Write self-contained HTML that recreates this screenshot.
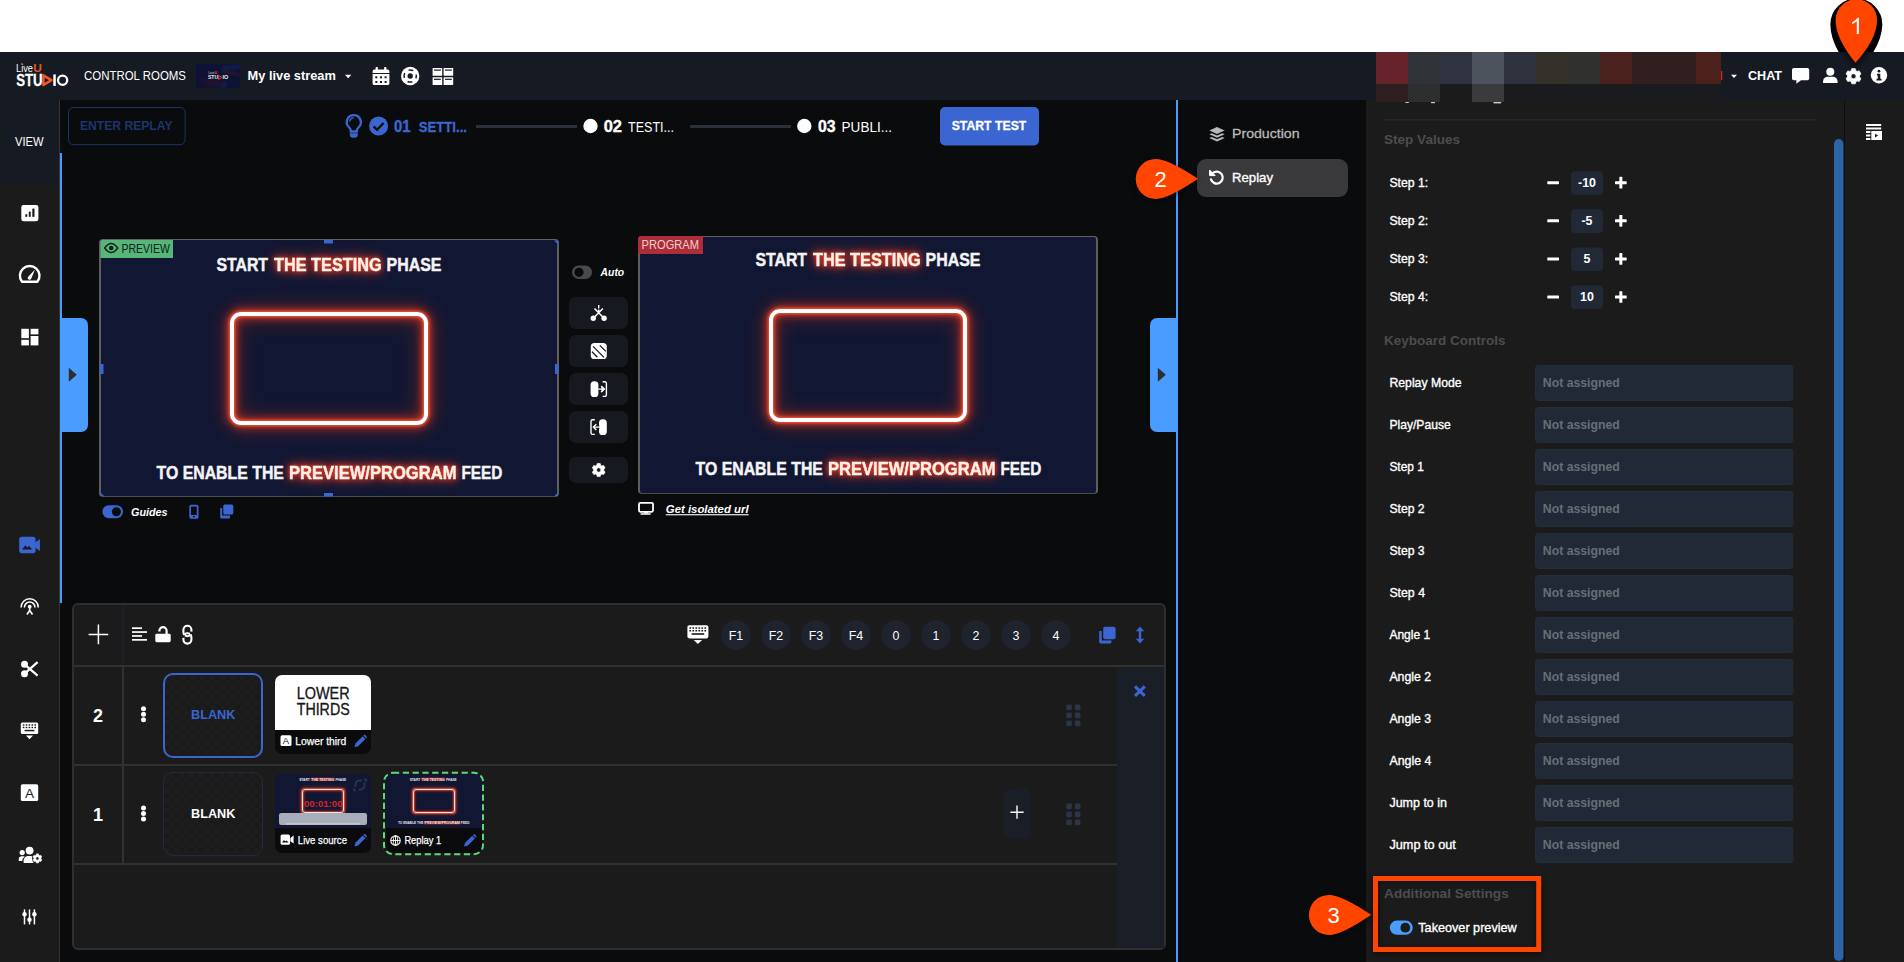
<!DOCTYPE html>
<html>
<head>
<meta charset="utf-8">
<title>LiveU Studio</title>
<style>
*{box-sizing:border-box;margin:0;padding:0}
html,body{width:1904px;height:962px;overflow:hidden;background:#fff;font-family:"Liberation Sans",sans-serif;color:#fff}
#app{position:absolute;left:0;top:0;width:1904px;height:962px;overflow:hidden;background:#0a0b0d}
.abs{position:absolute}
#ov{position:absolute;left:0;top:0;width:1904px;height:962px;font-family:"Liberation Sans",sans-serif;fill:#fff}
#white{left:0;top:0;width:1904px;height:52px;background:#fff}
#nav{left:0;top:52px;width:1904px;height:48px;background:#161a23}
#side{left:0;top:100px;width:60px;height:862px;background:#1b1b1b}
#sideTop{left:0;top:100px;width:60px;height:84px;background:#161a23}
#sideLn{left:59px;top:100px;width:1px;height:862px;background:#343434}
#blueL{left:60px;top:153px;width:2px;height:450px;background:#4a9dff}
#blueR{left:1176px;top:100px;width:2px;height:862px;background:#4a9dff}
#setNav{left:1178px;top:100px;width:188px;height:862px;background:#0a0b0d}
#setBody{left:1366px;top:100px;width:478px;height:862px;background:#1b1b1b}
#rail{left:1844px;top:100px;width:60px;height:862px;background:#1b1b1b;border-left:1px solid #0e0e0e}
</style>
</head>
<body>
<div id="app">
<div id="white" class="abs"></div>
<div id="nav" class="abs"></div>
<div id="side" class="abs"></div>
<div id="sideTop" class="abs"></div>
<div id="sideLn" class="abs"></div>
<div id="blueL" class="abs"></div>
<div id="blueR" class="abs"></div>
<div id="setNav" class="abs"></div>
<div id="setBody" class="abs"></div>
<div id="rail" class="abs"></div>
<!-- p_nav -->
<div class="abs" style="left:196px;top:64px;width:44px;height:24px;background:#0e1335;overflow:hidden"></div>
<div class="abs" style="left:1376px;top:52px;width:32px;height:32px;background:#66242a"></div>
<div class="abs" style="left:1408px;top:52px;width:32px;height:32px;background:#2f3338"></div>
<div class="abs" style="left:1440px;top:52px;width:32px;height:32px;background:#2f3340"></div>
<div class="abs" style="left:1472px;top:52px;width:32px;height:32px;background:#4d535c"></div>
<div class="abs" style="left:1504px;top:52px;width:32px;height:32px;background:#2e323c"></div>
<div class="abs" style="left:1536px;top:52px;width:32px;height:32px;background:#34302a"></div>
<div class="abs" style="left:1568px;top:52px;width:32px;height:32px;background:#30302e"></div>
<div class="abs" style="left:1600px;top:52px;width:32px;height:32px;background:#4a211c"></div>
<div class="abs" style="left:1632px;top:52px;width:32px;height:32px;background:#301f1e"></div>
<div class="abs" style="left:1664px;top:52px;width:32px;height:32px;background:#311e1f"></div>
<div class="abs" style="left:1696px;top:52px;width:25px;height:32px;background:#4c211c"></div>
<div class="abs" style="left:1376px;top:84px;width:32px;height:18px;background:#2e1e1f"></div>
<div class="abs" style="left:1408px;top:84px;width:32px;height:18px;background:#2d2e30"></div>
<div class="abs" style="left:1440px;top:84px;width:32px;height:18px;background:#1a1b1d"></div>
<div class="abs" style="left:1472px;top:84px;width:32px;height:18px;background:#3a3b3d"></div>
<div class="abs" style="left:1504px;top:84px;width:217px;height:16px;background:#1a1b1e"></div>
<!-- p_step -->

<!-- p_prev -->
<div class="abs" style="left:99px;top:239px;width:460px;height:258px;background:#111733;border-style:solid;border-color:#626264 #5e5e60 #4c4c50 #5e5e60;border-width:1.5px 2px 1px 2px;border-radius:4px"></div>
<div class="abs" style="left:230px;top:312px;width:198px;height:113px;border:4px solid #fff;border-radius:11px;box-shadow:0 0 3px 1px #f8583a,0 0 9px 2px rgba(222,58,30,.9),0 0 20px 4px rgba(190,44,24,.45),inset 0 0 3px 1px #f8583a,inset 0 0 9px 2px rgba(222,58,30,.9),inset 0 0 20px 4px rgba(190,44,24,.42)"></div>
<div class="abs" style="left:638px;top:236px;width:460px;height:258px;background:#111733;border-style:solid;border-color:#626264 #5e5e60 #4c4c50 #5e5e60;border-width:1.5px 2px 1px 2px;border-radius:4px"></div>
<div class="abs" style="left:769px;top:309px;width:198px;height:113px;border:4px solid #fff;border-radius:11px;box-shadow:0 0 3px 1px #f8583a,0 0 9px 2px rgba(222,58,30,.9),0 0 20px 4px rgba(190,44,24,.45),inset 0 0 3px 1px #f8583a,inset 0 0 9px 2px rgba(222,58,30,.9),inset 0 0 20px 4px rgba(190,44,24,.42)"></div>
<!-- p_time -->
<div class="abs" style="left:72px;top:603px;width:1094px;height:347px;background:#1b1b1b;border:2px solid #2f2f2f;border-radius:6px"></div>
<div class="abs" style="left:1117px;top:667px;width:47px;height:281px;background:#1a1e26"></div>
<div class="abs" style="left:163px;top:673px;width:100px;height:85px;border:2px solid #3b66d1;border-radius:10px;background-color:#1a1a1a;background-image:linear-gradient(45deg,#1d1d1d 25%,transparent 25%,transparent 75%,#1d1d1d 75%),linear-gradient(45deg,#1d1d1d 25%,transparent 25%,transparent 75%,#1d1d1d 75%);background-size:10px 10px;background-position:0 0,5px 5px"></div>
<div class="abs" style="left:163px;top:772px;width:100px;height:84px;border:1.5px solid #202c3e;border-radius:10px;background-color:#1a1a1a;background-image:linear-gradient(45deg,#1d1d1d 25%,transparent 25%,transparent 75%,#1d1d1d 75%),linear-gradient(45deg,#1d1d1d 25%,transparent 25%,transparent 75%,#1d1d1d 75%);background-size:10px 10px;background-position:0 0,5px 5px"></div>
<div class="abs" style="left:275px;top:675px;width:96px;height:79px;background:#0b0b0d;border-radius:7px"></div>
<div class="abs" style="left:275px;top:675px;width:96px;height:55px;background:#fff;border-radius:7px 7px 0 0"></div>
<div class="abs" style="left:275px;top:774px;width:96px;height:79px;background:#0b0b0d;border-radius:7px"></div>
<div class="abs" style="left:275px;top:774px;width:96px;height:54px;background:#111733;border-radius:6px 6px 0 0"></div>
<div class="abs" style="left:302.0px;top:789px;width:42px;height:24px;border:1px solid #ffe3dc;border-radius:3px;box-shadow:0 0 1.5px .5px #f04a30,0 0 3.5px .3px rgba(200,48,26,.7),inset 0 0 1.5px .5px #f04a30,inset 0 0 3.5px .3px rgba(200,48,26,.7)"></div>
<div class="abs" style="left:385.5px;top:774px;width:96px;height:79px;background:#0b0b0d;border-radius:7px"></div>
<div class="abs" style="left:385.5px;top:774px;width:96px;height:54px;background:#111733;border-radius:6px 6px 0 0"></div>
<div class="abs" style="left:412.5px;top:789px;width:42px;height:24px;border:1px solid #ffe3dc;border-radius:3px;box-shadow:0 0 1.5px .5px #f04a30,0 0 3.5px .3px rgba(200,48,26,.7),inset 0 0 1.5px .5px #f04a30,inset 0 0 3.5px .3px rgba(200,48,26,.7)"></div>
<!-- p_set -->

<!-- p_side -->

<!-- p_mark -->

<svg id="ov" width="1904" height="962" viewBox="0 0 1904 962">
<!-- p_nav -->
<g id="p_nav">
<text x="16" y="72.4" font-size="11" textLength="17" lengthAdjust="spacingAndGlyphs">Live</text>
<text x="33.2" y="72.4" font-size="11.5" font-weight="bold" fill="#e8541e" textLength="8.6" lengthAdjust="spacingAndGlyphs">U</text>
<rect x="21.2" y="63" width="1.4" height="1.6" fill="#e8541e"/>
<text x="16.2" y="85.9" font-size="16" font-weight="bold" textLength="26.5" lengthAdjust="spacingAndGlyphs" stroke="#fff" stroke-width=".3">STU</text>
<path d="M43.4 75.4 L51.4 80.2 L43.4 85Z" fill="none" stroke="#f05a22" stroke-width="2.6" stroke-linejoin="round"/>
<rect x="53.3" y="74.4" width="2.5" height="11.5" fill="#fff"/>
<circle cx="62.6" cy="80.2" r="4.6" fill="none" stroke="#fff" stroke-width="2.3"/>
<text x="84" y="80.2" font-size="12.3" textLength="102" lengthAdjust="spacingAndGlyphs">CONTROL ROOMS</text>
<defs><clipPath id="ct"><rect x="196" y="64" width="44" height="24"/></clipPath></defs><g clip-path="url(#ct)"><g style="filter:blur(.8px)"><path d="M222 66.4 L240 64.6 V68.6 L222 70Z" fill="#0b2c6e" opacity=".5"/><path d="M222.6 69.6 L240 73.6 V76 L222.6 72.2Z" fill="#4a1528" opacity=".6"/><path d="M197 76.6 L225 81.4 V85.4 L208 87.6Z" fill="#30122e" opacity=".5"/><rect x="224.2" y="81" width="1.3" height="7" fill="#0c3c90" opacity=".8"/><path d="M212 88 L224.6 86.2 V88Z" fill="#0b2c6e" opacity=".5"/></g></g>
<text x="208.2" y="74.2" font-size="3.4" fill="#cfcfd6" textLength="6.2" lengthAdjust="spacingAndGlyphs">Live</text>
<text x="214.6" y="74.2" font-size="3.4" font-weight="bold" fill="#e8541e" textLength="2.6" lengthAdjust="spacingAndGlyphs">U</text>
<text x="208" y="79.4" font-size="5.6" font-weight="bold" fill="#ececf2" textLength="10" lengthAdjust="spacingAndGlyphs">STU</text>
<path d="M218.6 75.4 L221.8 77.4 L218.6 79.4Z" fill="none" stroke="#e8541e" stroke-width="0.9"/>
<text x="222.6" y="79.4" font-size="5.6" font-weight="bold" fill="#ececf2" textLength="5.8" lengthAdjust="spacingAndGlyphs">IO</text>
<text x="247.6" y="80.2" font-size="13.4" font-weight="bold" textLength="88.2" lengthAdjust="spacingAndGlyphs">My live stream</text>
<path d="M345 74.7 h6.4 l-3.2 3.5Z" fill="#fff"/>
<path d="M372.6 71.2 a1.7 1.7 0 0 1 1.7 -1.7 h13.4 a1.7 1.7 0 0 1 1.7 1.7 v1.7 h-16.8Z" fill="#fff"/>
<rect x="375.6" y="67" width="2.3" height="4" fill="#fff" rx="0.8"/>
<rect x="384.1" y="67" width="2.3" height="4" fill="#fff" rx="0.8"/>
<path d="M372.6 73.9 h16.8 v9.5 a1.7 1.7 0 0 1 -1.7 1.7 h-13.4 a1.7 1.7 0 0 1 -1.7 -1.7Z" fill="#fff"/>
<rect x="375.3" y="76.3" width="2" height="2" fill="#161a23"/>
<rect x="379.95" y="76.3" width="2" height="2" fill="#161a23"/>
<rect x="384.6" y="76.3" width="2" height="2" fill="#161a23"/>
<rect x="375.3" y="81.0" width="2" height="2" fill="#161a23"/>
<rect x="379.95" y="81.0" width="2" height="2" fill="#161a23"/>
<rect x="384.6" y="81.0" width="2" height="2" fill="#161a23"/>
<circle cx="410.2" cy="76" r="9.2" fill="#fff"/>
<circle cx="410.2" cy="76" r="2.7" fill="#161a23"/>
<circle cx="410.2" cy="76" r="6.1" fill="none" stroke="#161a23" stroke-width="1.5" stroke-dasharray="4.9 4.68" stroke-dashoffset="2.45"/>
<rect x="432.6" y="68" width="9.6" height="7.8" fill="#fff" rx="0.6"/>
<rect x="434.0" y="69.5" width="6.8" height="1.2" fill="#161a23"/>
<rect x="443.6" y="68" width="9.6" height="7.8" fill="#fff" rx="0.6"/>
<rect x="445.0" y="69.5" width="6.8" height="1.2" fill="#161a23"/>
<rect x="432.6" y="77.2" width="9.6" height="7.8" fill="#fff" rx="0.6"/>
<rect x="434.0" y="78.7" width="6.8" height="1.2" fill="#161a23"/>
<rect x="443.6" y="77.2" width="9.6" height="7.8" fill="#fff" rx="0.6"/>
<rect x="445.0" y="78.7" width="6.8" height="1.2" fill="#161a23"/>
<rect x="1721" y="71" width="1.3" height="9" fill="#d81f26"/>
<path d="M1731 74.8 h6 l-3 3.3Z" fill="#fff"/>
<text x="1748" y="80.2" font-size="13" font-weight="bold" textLength="34" lengthAdjust="spacingAndGlyphs">CHAT</text>
<path d="M1793.8 68 h13.6 a1.8 1.8 0 0 1 1.8 1.8 v8.6 a1.8 1.8 0 0 1 -1.8 1.8 h-6.4 l-4.6 3.5 v-3.5 h-2.6 a1.8 1.8 0 0 1 -1.8 -1.8 v-8.6 a1.8 1.8 0 0 1 1.8 -1.8Z" fill="#fff"/>
<circle cx="1830.3" cy="71.8" r="4" fill="#fff"/>
<path d="M1823 83 v-1.6 a4.6 4.6 0 0 1 4.6 -4.6 h5.4 a4.6 4.6 0 0 1 4.6 4.6 v1.6Z" fill="#fff"/>
<path d="M1851.22 70.64 L1851.75 68.60 L1855.25 68.60 L1855.78 70.64 L1857.17 71.45 L1859.21 70.88 L1860.96 73.91 L1859.45 75.40 L1859.45 77.00 L1860.96 78.49 L1859.21 81.52 L1857.17 80.95 L1855.78 81.76 L1855.25 83.80 L1851.75 83.80 L1851.22 81.76 L1849.83 80.95 L1847.79 81.52 L1846.04 78.49 L1847.55 77.00 L1847.55 75.40 L1846.04 73.91 L1847.79 70.88 L1849.83 71.45Z M1850.93 76.20 a2.574 2.574 0 1 0 5.148 0 a2.574 2.574 0 1 0 -5.148 0Z" fill="#fff" fill-rule="evenodd" stroke="#fff" stroke-width="0.78" stroke-linejoin="round"/>
<circle cx="1879" cy="75.3" r="8.2" fill="#fff"/>
<circle cx="1879" cy="71.2" r="1.35" fill="#161a23"/>
<path d="M1877 73.8 h3.3 v5 h1.2 v1.7 h-5 v-1.7 h1.3 v-3.3 h-.8Z" fill="#161a23"/>
</g>
<!-- p_step -->
<g id="p_step">
<text x="15" y="145.7" font-size="12" textLength="28.7" lengthAdjust="spacingAndGlyphs">VIEW</text>
<rect x="68.5" y="107.5" width="116.6" height="37.2" fill="none" rx="5" stroke="#1c3468" stroke-width="1"/>
<text x="80" y="129.8" font-size="12" font-weight="bold" fill="#1d356c" textLength="92.5" lengthAdjust="spacingAndGlyphs">ENTER REPLAY</text>
<path d="M353.8 115.2 a7 7 0 0 1 4.6 12.3 c-1.1 1 -1.6 2.2 -1.6 3.4 v.6 h-6 v-.6 c0 -1.2 -.5 -2.4 -1.6 -3.4 a7 7 0 0 1 4.6 -12.3Z" fill="none" stroke="#3b66d1" stroke-width="2.3"/>
<path d="M349.8 121.2 a4 4 0 0 1 3.6 -3.3" fill="none" stroke="#3b66d1" stroke-width="1.3" stroke-linecap="round"/>
<path d="M349.8 133.3 h8 v1.1 a3.3 3.3 0 0 1 -3.3 3.3 h-1.4 a3.3 3.3 0 0 1 -3.3 -3.3Z" fill="#3b66d1"/>
<circle cx="378.6" cy="126" r="9.5" fill="#3b66d1"/>
<path d="M373.6 126.4 l3.4 3.4 l6.6 -6.8" fill="none" stroke="#0a0b0d" stroke-width="2.3"/>
<text x="394" y="132" font-size="17.2" font-weight="bold" fill="#3b66d1" textLength="16.6" lengthAdjust="spacingAndGlyphs" stroke="#3b66d1" stroke-width=".4">01</text>
<text x="418.7" y="132" font-size="14.4" font-weight="bold" fill="#3b66d1" textLength="48.3" lengthAdjust="spacingAndGlyphs" stroke="#3b66d1" stroke-width=".3">SETTI...</text>
<rect x="476" y="125" width="101" height="3" fill="#2a313b"/>
<circle cx="590.5" cy="126" r="7.2" fill="#fff"/>
<text x="603.7" y="132" font-size="17.2" font-weight="bold" textLength="18.3" lengthAdjust="spacingAndGlyphs" stroke="#fff" stroke-width=".4">02</text>
<text x="628" y="132" font-size="14.4" textLength="46" lengthAdjust="spacingAndGlyphs">TESTI...</text>
<rect x="690" y="125" width="101" height="3" fill="#2a313b"/>
<circle cx="804.3" cy="126" r="7.2" fill="#fff"/>
<text x="818" y="132" font-size="17.2" font-weight="bold" textLength="17.6" lengthAdjust="spacingAndGlyphs" stroke="#fff" stroke-width=".4">03</text>
<text x="841.6" y="132" font-size="14.4" textLength="50.4" lengthAdjust="spacingAndGlyphs">PUBLI...</text>
<rect x="940" y="107" width="99" height="38.4" fill="#3b66d1" rx="5"/>
<text x="951.7" y="130.4" font-size="13" font-weight="bold" textLength="74.6" lengthAdjust="spacingAndGlyphs" stroke="#fff" stroke-width=".3">START TEST</text>
</g>
<!-- p_prev -->
<g id="p_prev">
<text x="216.4" y="270.7" font-size="18.3" font-weight="bold" fill="#f4f4f4" textLength="51.6" lengthAdjust="spacingAndGlyphs" stroke="#f4f4f4" stroke-width=".45">START</text>
<text x="274" y="270.7" font-size="18.3" font-weight="bold" fill="#fff0ea" textLength="107.7" lengthAdjust="spacingAndGlyphs" stroke="#fff0ea" stroke-width=".45" style="filter:drop-shadow(0 0 2.5px #f0401f) drop-shadow(0 0 6px rgba(215,50,28,.9))">THE TESTING</text>
<text x="386.6" y="270.7" font-size="18.3" font-weight="bold" fill="#f4f4f4" textLength="54.9" lengthAdjust="spacingAndGlyphs" stroke="#f4f4f4" stroke-width=".45">PHASE</text>
<text x="156.5" y="478.8" font-size="18.3" font-weight="bold" fill="#f4f4f4" textLength="127.4" lengthAdjust="spacingAndGlyphs" stroke="#f4f4f4" stroke-width=".45">TO ENABLE THE</text>
<text x="288.9" y="478.8" font-size="18.3" font-weight="bold" fill="#fff0ea" textLength="167.6" lengthAdjust="spacingAndGlyphs" stroke="#fff0ea" stroke-width=".45" style="filter:drop-shadow(0 0 2.5px #f0401f) drop-shadow(0 0 6px rgba(215,50,28,.9))">PREVIEW/PROGRAM</text>
<text x="461.5" y="478.8" font-size="18.3" font-weight="bold" fill="#f4f4f4" textLength="40.9" lengthAdjust="spacingAndGlyphs" stroke="#f4f4f4" stroke-width=".45">FEED</text>
<text x="755.4" y="266.4" font-size="18.3" font-weight="bold" fill="#f4f4f4" textLength="51.6" lengthAdjust="spacingAndGlyphs" stroke="#f4f4f4" stroke-width=".45">START</text>
<text x="813" y="266.4" font-size="18.3" font-weight="bold" fill="#fff0ea" textLength="107.7" lengthAdjust="spacingAndGlyphs" stroke="#fff0ea" stroke-width=".45" style="filter:drop-shadow(0 0 2.5px #f0401f) drop-shadow(0 0 6px rgba(215,50,28,.9))">THE TESTING</text>
<text x="925.6" y="266.4" font-size="18.3" font-weight="bold" fill="#f4f4f4" textLength="54.9" lengthAdjust="spacingAndGlyphs" stroke="#f4f4f4" stroke-width=".45">PHASE</text>
<text x="695.5" y="475.2" font-size="18.3" font-weight="bold" fill="#f4f4f4" textLength="127.4" lengthAdjust="spacingAndGlyphs" stroke="#f4f4f4" stroke-width=".45">TO ENABLE THE</text>
<text x="827.9" y="475.2" font-size="18.3" font-weight="bold" fill="#fff0ea" textLength="167.6" lengthAdjust="spacingAndGlyphs" stroke="#fff0ea" stroke-width=".45" style="filter:drop-shadow(0 0 2.5px #f0401f) drop-shadow(0 0 6px rgba(215,50,28,.9))">PREVIEW/PROGRAM</text>
<text x="1000.5" y="475.2" font-size="18.3" font-weight="bold" fill="#f4f4f4" textLength="40.9" lengthAdjust="spacingAndGlyphs" stroke="#f4f4f4" stroke-width=".45">FEED</text>
<path d="M100.5 242.4 a2.5 2.5 0 0 1 2.5 -2.5 h70 v18.2 h-72.5Z" fill="#57b57a"/>
<path d="M104.6 248 q6.6 -9 13.2 0 q-6.6 9 -13.2 0Z" fill="none" stroke="#0d2417" stroke-width="1.3"/>
<circle cx="111.2" cy="248" r="2.3" fill="#0d2417"/>
<text x="121.5" y="253" font-size="13" fill="#0d2417" textLength="48.3" lengthAdjust="spacingAndGlyphs">PREVIEW</text>
<rect x="324" y="240" width="9" height="3.5" fill="#3b66d1"/>
<rect x="324" y="493" width="9" height="3.5" fill="#3b66d1"/>
<rect x="100" y="364" width="3.5" height="10" fill="#3b66d1"/>
<rect x="555" y="364" width="3.5" height="10" fill="#3b66d1"/>
<path d="M554 240.5 h3 l1.5 1.5 v3Z" fill="#3b66d1"/>
<path d="M100.5 492.5 v3 l.8 .8 h3Z" fill="#3b66d1"/>
<path d="M558 492.5 v3 l-.8 .8 h-3Z" fill="#3b66d1"/>
<path d="M100.6 243 l2.4 -2.4 h-1.6 l-.8 .8Z" fill="#6aa0e8"/>
<path d="M638 239.4 a3.4 3.4 0 0 1 3.4 -3.4 h61.6 v18 h-65Z" fill="#ad2e38"/>
<text x="641.6" y="248.9" font-size="12.8" fill="#f0cfd2" textLength="57.4" lengthAdjust="spacingAndGlyphs">PROGRAM</text>
<rect x="572" y="265.6" width="20" height="13.4" fill="#4a4a4a" rx="6.7"/>
<circle cx="579" cy="272.3" r="4.6" fill="#0a0b0d"/>
<text x="600.6" y="275.9" font-size="11" font-weight="bold" font-style="italic" textLength="23.6" lengthAdjust="spacingAndGlyphs">Auto</text>
<rect x="569" y="297" width="59" height="32" fill="#161a20" rx="7"/>
<rect x="569" y="335" width="59" height="32" fill="#161a20" rx="7"/>
<rect x="569" y="373" width="59" height="32" fill="#161a20" rx="7"/>
<rect x="569" y="411" width="59" height="32" fill="#161a20" rx="7"/>
<rect x="569" y="457" width="59" height="26" fill="#161a20" rx="7"/>
<rect x="598.0" y="305" width="1.4" height="3.4" fill="#fff"/>
<path d="M594.5 308.6 L603.3000000000001 317.6 M602.9000000000001 308.6 L594.1 317.6 M598.7 309.6 v2.4" fill="none" stroke="#fff" stroke-width="1.5"/>
<circle cx="593.3000000000001" cy="318.2" r="2.7" fill="#fff"/>
<circle cx="604.1" cy="318.2" r="2.7" fill="#fff"/>
<rect x="590.8" y="343" width="16" height="16" fill="#fff" rx="3.6"/>
<path d="M593 346.4 l11 11 M592 351.8 l5.4 5.4 M599.8 345.4 l6 6" fill="none" stroke="#161a20" stroke-width="1.3"/>
<rect x="590.6" y="381.2" width="7.8" height="15.8" fill="#fff" rx="3.6"/>
<path d="M602.6 381.8 h2.2 a1.6 1.6 0 0 1 1.6 1.6 v11.4 a1.6 1.6 0 0 1 -1.6 1.6 h-2.2" fill="none" stroke="#fff" stroke-width="1.4"/>
<path d="M597.5 389.1 h6.2 M601.2 386.2 l2.9 2.9 l-2.9 2.9" fill="none" stroke="#fff" stroke-width="1.4"/>
<path d="M598.4 387.6 h2.6 v3 h-2.6Z" fill="#161a20"/>
<path d="M597.5 389.1 h6.2 M601.2 386.2 l2.9 2.9 l-2.9 2.9" fill="none" stroke="#fff" stroke-width="1.4"/>
<rect x="599" y="419.2" width="7.8" height="15.8" fill="#fff" rx="3.6"/>
<path d="M594.8 419.8 h-2.2 a1.6 1.6 0 0 0 -1.6 1.6 v11.4 a1.6 1.6 0 0 0 1.6 1.6 h2.2" fill="none" stroke="#fff" stroke-width="1.4"/>
<path d="M596.4 425.6 h3 v3 h-3Z" fill="#161a20"/>
<path d="M600 427.1 h-6.2 M596.3 424.2 l-2.9 2.9 l2.9 2.9" fill="none" stroke="#fff" stroke-width="1.4"/>
<path d="M596.74 465.23 L597.20 463.47 L600.20 463.47 L600.66 465.23 L601.85 465.92 L603.60 465.43 L605.11 468.04 L603.81 469.31 L603.81 470.69 L605.11 471.96 L603.60 474.57 L601.85 474.08 L600.66 474.77 L600.20 476.53 L597.20 476.53 L596.74 474.77 L595.55 474.08 L593.80 474.57 L592.29 471.96 L593.59 470.69 L593.59 469.31 L592.29 468.04 L593.80 465.43 L595.55 465.92Z M596.49 470.00 a2.2110000000000003 2.2110000000000003 0 1 0 4.422000000000001 0 a2.2110000000000003 2.2110000000000003 0 1 0 -4.422000000000001 0Z" fill="#fff" fill-rule="evenodd" stroke="#fff" stroke-width="0.67" stroke-linejoin="round"/>
<rect x="102.4" y="505.2" width="20.6" height="13" fill="#3b66d1" rx="6.5"/>
<circle cx="116.4" cy="511.7" r="4.5" fill="#0a0b0d"/>
<text x="131" y="515.6" font-size="11.4" font-weight="bold" font-style="italic" textLength="36.6" lengthAdjust="spacingAndGlyphs">Guides</text>
<rect x="189.3" y="504.7" width="9.2" height="14.1" fill="#3b66d1" rx="1.9"/>
<rect x="191" y="506.6" width="5.8" height="8.4" fill="#0a0b0d"/>
<rect x="193" y="516" width="1.8" height="1.3" fill="#0a0b0d"/>
<rect x="223.3" y="504.6" width="10" height="10" fill="#3b66d1" rx="1.6"/>
<path d="M220.2 508 h2 v7.6 h7.8 v1.6 a1.2 1.2 0 0 1 -1.2 1.2 h-7.4 a1.2 1.2 0 0 1 -1.2 -1.2Z" fill="#3b66d1"/>
<rect x="639" y="502.8" width="14" height="9" fill="none" rx="1.2" stroke="#fff" stroke-width="1.8"/>
<path d="M644.5 512 h3 l.6 1.6 h-4.2Z" fill="#fff"/>
<rect x="640.4" y="513.3" width="10.4" height="1.4" fill="#fff" rx="0.6"/>
<text x="665.8" y="512.6" font-size="11.4" font-weight="bold" font-style="italic" textLength="82.8" lengthAdjust="spacingAndGlyphs">Get isolated url</text>
<rect x="665.8" y="514.2" width="82.8" height="1.1" fill="#fff"/>
<path d="M62 318 h19 a7 7 0 0 1 7 7 v100 a7 7 0 0 1 -7 7 h-19Z" fill="#4a9dff"/>
<path d="M68.8 367.8 l8 7 l-8 7Z" fill="#2d2d30"/>
<path d="M1176 318 h-19 a7 7 0 0 0 -7 7 v100 a7 7 0 0 0 7 7 h19Z" fill="#4a9dff"/>
<path d="M1157.8 367.8 l8 7 l-8 7Z" fill="#2d2d30"/>
</g>
<!-- p_time -->
<g id="p_time">
<rect x="74" y="665" width="1090" height="2" fill="#313131"/>
<rect x="122" y="605" width="2" height="60" fill="#1c2029"/>
<rect x="122" y="667" width="2" height="197" fill="#313131"/>
<rect x="74" y="764" width="1043" height="2" fill="#313131"/>
<rect x="74" y="863" width="1043" height="2" fill="#313131"/>
<path d="M98.4 624.6 v19.6 M88.6 634.4 h19.6" fill="none" stroke="#fff" stroke-width="1.5"/>
<rect x="132" y="627.3" width="10" height="1.7" fill="#fff"/>
<rect x="132" y="631.1999999999999" width="15" height="1.7" fill="#fff"/>
<rect x="132" y="635.0999999999999" width="10" height="1.7" fill="#fff"/>
<rect x="132" y="639.0" width="15" height="1.7" fill="#fff"/>
<rect x="155.3" y="633.8" width="15.4" height="8.4" fill="#fff" rx="1.4"/>
<path d="M166.6 634 v-3.2 a3.6 3.6 0 0 0 -7.2 0 v.6" fill="none" stroke="#fff" stroke-width="2.2"/>
<rect x="183.4" y="625.8" width="8" height="10.4" fill="none" rx="4" stroke="#fff" stroke-width="2.1"/>
<rect x="183.4" y="633.2" width="8" height="10.4" fill="none" rx="4" stroke="#fff" stroke-width="2.1"/>
<rect x="190" y="631.6" width="3" height="2.6" fill="#1b1b1b"/>
<rect x="181.8" y="635.2" width="3" height="2.6" fill="#1b1b1b"/>
<rect x="687.4" y="625.2" width="21" height="13.2" fill="#fff" rx="1.8"/>
<rect x="689.4" y="627.3" width="1.7" height="1.5" fill="#1b1b1b"/>
<rect x="692.4" y="627.3" width="1.7" height="1.5" fill="#1b1b1b"/>
<rect x="695.4" y="627.3" width="1.7" height="1.5" fill="#1b1b1b"/>
<rect x="698.4" y="627.3" width="1.7" height="1.5" fill="#1b1b1b"/>
<rect x="701.4" y="627.3" width="1.7" height="1.5" fill="#1b1b1b"/>
<rect x="704.4" y="627.3" width="1.7" height="1.5" fill="#1b1b1b"/>
<rect x="689.4" y="630.0" width="1.7" height="1.5" fill="#1b1b1b"/>
<rect x="692.4" y="630.0" width="1.7" height="1.5" fill="#1b1b1b"/>
<rect x="695.4" y="630.0" width="1.7" height="1.5" fill="#1b1b1b"/>
<rect x="698.4" y="630.0" width="1.7" height="1.5" fill="#1b1b1b"/>
<rect x="701.4" y="630.0" width="1.7" height="1.5" fill="#1b1b1b"/>
<rect x="704.4" y="630.0" width="1.7" height="1.5" fill="#1b1b1b"/>
<rect x="691.6" y="633.2" width="12.6" height="1.6" fill="#1b1b1b"/>
<path d="M693.6 640 h8.6 l-4.3 4Z" fill="#fff"/>
<circle cx="736" cy="635.2" r="15" fill="#1e232d"/>
<text x="736" y="639.6" font-size="12.4" text-anchor="middle">F1</text>
<circle cx="776" cy="635.2" r="15" fill="#1e232d"/>
<text x="776" y="639.6" font-size="12.4" text-anchor="middle">F2</text>
<circle cx="816" cy="635.2" r="15" fill="#1e232d"/>
<text x="816" y="639.6" font-size="12.4" text-anchor="middle">F3</text>
<circle cx="856" cy="635.2" r="15" fill="#1e232d"/>
<text x="856" y="639.6" font-size="12.4" text-anchor="middle">F4</text>
<circle cx="896" cy="635.2" r="15" fill="#1e232d"/>
<text x="896" y="639.6" font-size="12.4" text-anchor="middle">0</text>
<circle cx="936" cy="635.2" r="15" fill="#1e232d"/>
<text x="936" y="639.6" font-size="12.4" text-anchor="middle">1</text>
<circle cx="976" cy="635.2" r="15" fill="#1e232d"/>
<text x="976" y="639.6" font-size="12.4" text-anchor="middle">2</text>
<circle cx="1016" cy="635.2" r="15" fill="#1e232d"/>
<text x="1016" y="639.6" font-size="12.4" text-anchor="middle">3</text>
<circle cx="1056" cy="635.2" r="15" fill="#1e232d"/>
<text x="1056" y="639.6" font-size="12.4" text-anchor="middle">4</text>
<rect x="1103.2" y="626.8" width="12.4" height="12.4" fill="#3b66d1" rx="2"/>
<path d="M1099.2 631 h2.5 v9.6 h9.7 v1.4 a1.5 1.5 0 0 1 -1.5 1.5 h-9.2 a1.5 1.5 0 0 1 -1.5 -1.5Z" fill="#3b66d1"/>
<path d="M1140 626.4 l4.2 4.8 h-3 v7.6 h3 l-4.2 4.8 l-4.2 -4.8 h3 v-7.6 h-3Z" fill="#3b66d1"/>
<path d="M1135 686.4 l9.8 9.4 M1144.8 686.4 l-9.8 9.4" fill="none" stroke="#3b66d1" stroke-width="3"/>
<rect x="1066.3" y="704.6" width="5.6" height="5.6" fill="#2c3546" rx="1.4"/>
<rect x="1074.8999999999999" y="704.6" width="5.6" height="5.6" fill="#2c3546" rx="1.4"/>
<rect x="1066.3" y="712.6" width="5.6" height="5.6" fill="#2c3546" rx="1.4"/>
<rect x="1074.8999999999999" y="712.6" width="5.6" height="5.6" fill="#2c3546" rx="1.4"/>
<rect x="1066.3" y="720.6" width="5.6" height="5.6" fill="#2c3546" rx="1.4"/>
<rect x="1074.8999999999999" y="720.6" width="5.6" height="5.6" fill="#2c3546" rx="1.4"/>
<rect x="1066.3" y="803.6" width="5.6" height="5.6" fill="#2c3546" rx="1.4"/>
<rect x="1074.8999999999999" y="803.6" width="5.6" height="5.6" fill="#2c3546" rx="1.4"/>
<rect x="1066.3" y="811.6" width="5.6" height="5.6" fill="#2c3546" rx="1.4"/>
<rect x="1074.8999999999999" y="811.6" width="5.6" height="5.6" fill="#2c3546" rx="1.4"/>
<rect x="1066.3" y="819.6" width="5.6" height="5.6" fill="#2c3546" rx="1.4"/>
<rect x="1074.8999999999999" y="819.6" width="5.6" height="5.6" fill="#2c3546" rx="1.4"/>
<rect x="1004" y="789" width="26" height="49.6" fill="#1a1e26" rx="5"/>
<path d="M1017 805.6 v13.2 M1010.4 812.2 h13.2" fill="none" stroke="#fff" stroke-width="1.4"/>
<text x="98" y="722.2" font-size="18" font-weight="bold" text-anchor="middle">2</text>
<text x="98" y="821.2" font-size="18" font-weight="bold" text-anchor="middle">1</text>
<circle cx="143.5" cy="708.7" r="2.5" fill="#fff"/>
<circle cx="143.5" cy="714.2" r="2.5" fill="#fff"/>
<circle cx="143.5" cy="719.7" r="2.5" fill="#fff"/>
<circle cx="143.5" cy="808.0" r="2.5" fill="#fff"/>
<circle cx="143.5" cy="813.5" r="2.5" fill="#fff"/>
<circle cx="143.5" cy="819.0" r="2.5" fill="#fff"/>
<text x="191" y="719.2" font-size="12.3" font-weight="bold" fill="#3b66d1" textLength="44.4" lengthAdjust="spacingAndGlyphs">BLANK</text>
<text x="191" y="818.2" font-size="12.3" font-weight="bold" textLength="44.4" lengthAdjust="spacingAndGlyphs">BLANK</text>
<text x="296.7" y="699.3" font-size="15.6" fill="#161616" textLength="53" lengthAdjust="spacingAndGlyphs" stroke="#161616" stroke-width=".3">LOWER</text>
<text x="296.7" y="714.9" font-size="15.6" fill="#161616" textLength="53" lengthAdjust="spacingAndGlyphs" stroke="#161616" stroke-width=".3">THIRDS</text>
<rect x="280.5" y="735.3" width="11" height="10.8" fill="#fff" rx="1.6"/>
<text x="286" y="744.4" font-size="9.5" fill="#20232c" text-anchor="middle">A</text>
<text x="295.3" y="744.8" font-size="11" textLength="51" lengthAdjust="spacingAndGlyphs" stroke="#fff" stroke-width=".25">Lower third</text>
<g transform="translate(354.5 735.2)"><path d="M0 12 l.9 -3.6 L8.2 1.1 l2.7 2.7 L3.6 11.1Z M8.9 .4 l.5 -.5 a1 1 0 0 1 1.4 0 l1.3 1.3 a1 1 0 0 1 0 1.4 l-.5 .5Z" fill="#3b66d1"/></g>
<rect x="310.6" y="777.4" width="24.2" height="3.6" fill="#d8301f" rx="1" opacity=".6" style="filter:blur(.7px)"/>
<rect x="313.4" y="820.9" width="36.8" height="3.6" fill="#d8301f" rx="1" opacity=".6" style="filter:blur(.7px)"/>
<text x="299.2" y="780.5" font-size="3.9" font-weight="bold" fill="#e9e9ee" textLength="10.6" lengthAdjust="spacingAndGlyphs">START</text>
<text x="311.3" y="780.5" font-size="3.9" font-weight="bold" fill="#ffe6e0" textLength="22.8" lengthAdjust="spacingAndGlyphs">THE TESTING</text>
<text x="335.4" y="780.5" font-size="3.9" font-weight="bold" fill="#e9e9ee" textLength="10.8" lengthAdjust="spacingAndGlyphs">PHASE</text>
<text x="287.4" y="824" font-size="3.9" font-weight="bold" fill="#e9e9ee" textLength="25.6" lengthAdjust="spacingAndGlyphs">TO ENABLE THE</text>
<text x="314.1" y="824" font-size="3.9" font-weight="bold" fill="#ffe6e0" textLength="35.4" lengthAdjust="spacingAndGlyphs">PREVIEW/PROGRAM</text>
<text x="350.6" y="824" font-size="3.9" font-weight="bold" fill="#e9e9ee" textLength="8.4" lengthAdjust="spacingAndGlyphs">FEED</text>
<text x="304" y="807" font-size="9.6" font-weight="bold" fill="#d8262c" textLength="38.5" lengthAdjust="spacingAndGlyphs">00:01:00</text>
<rect x="279" y="813" width="88" height="12" fill="#a9acb9" rx="2.2"/>
<rect x="286" y="823.2" width="74" height="1.3" fill="#c9cbd4"/>
<circle cx="360" cy="785" r="4.6" fill="none" stroke="#2c3850" stroke-width="1.8" stroke-dasharray="10.5 4" transform="rotate(-30 360 785)"/>
<path d="M363.4 778.6 l3.6 .4 l-.6 3.8Z M356.6 791.4 l-3.6 -.4 l.6 -3.8Z" fill="#2c3850"/>
<rect x="280.6" y="834.4" width="9.4" height="10.4" fill="#fff" rx="1.6"/>
<path d="M290.4 838 l3.2 -2.4 v8 l-3.2 -2.4Z" fill="#fff"/>
<path d="M282 842.6 l2 -2.6 l1.4 1.6 l1.2 -1 l2 2Z" fill="#0b0b0d"/>
<text x="297.8" y="843.9" font-size="11" textLength="49.2" lengthAdjust="spacingAndGlyphs" stroke="#fff" stroke-width=".25">Live source</text>
<g transform="translate(354.5 834.4)"><path d="M0 12 l.9 -3.6 L8.2 1.1 l2.7 2.7 L3.6 11.1Z M8.9 .4 l.5 -.5 a1 1 0 0 1 1.4 0 l1.3 1.3 a1 1 0 0 1 0 1.4 l-.5 .5Z" fill="#3b66d1"/></g>
<rect x="421.1" y="777.4" width="24.2" height="3.6" fill="#d8301f" rx="1" opacity=".6" style="filter:blur(.7px)"/>
<rect x="423.9" y="820.9" width="36.8" height="3.6" fill="#d8301f" rx="1" opacity=".6" style="filter:blur(.7px)"/>
<text x="409.7" y="780.5" font-size="3.9" font-weight="bold" fill="#e9e9ee" textLength="10.6" lengthAdjust="spacingAndGlyphs">START</text>
<text x="421.8" y="780.5" font-size="3.9" font-weight="bold" fill="#ffe6e0" textLength="22.8" lengthAdjust="spacingAndGlyphs">THE TESTING</text>
<text x="445.9" y="780.5" font-size="3.9" font-weight="bold" fill="#e9e9ee" textLength="10.8" lengthAdjust="spacingAndGlyphs">PHASE</text>
<text x="397.9" y="824" font-size="3.9" font-weight="bold" fill="#e9e9ee" textLength="25.6" lengthAdjust="spacingAndGlyphs">TO ENABLE THE</text>
<text x="424.6" y="824" font-size="3.9" font-weight="bold" fill="#ffe6e0" textLength="35.4" lengthAdjust="spacingAndGlyphs">PREVIEW/PROGRAM</text>
<text x="461.1" y="824" font-size="3.9" font-weight="bold" fill="#e9e9ee" textLength="8.4" lengthAdjust="spacingAndGlyphs">FEED</text>
<rect x="384" y="772.8" width="99" height="81.4" fill="none" rx="9" stroke="#5bd97b" stroke-width="2" stroke-dasharray="6.2 3.6"/>
<circle cx="395.5" cy="840.5" r="4.7" fill="none" stroke="#fff" stroke-width="1.1"/>
<path d="M395.5 835.8 v9.4 M390.8 840.5 h9.4" fill="none" stroke="#fff" stroke-width="0.9"/>
<ellipse cx="395.5" cy="840.5" rx="2.2" ry="4.7" fill="none" stroke="#fff" stroke-width=".9"/>
<text x="404.4" y="844.4" font-size="11" textLength="36.8" lengthAdjust="spacingAndGlyphs" stroke="#fff" stroke-width=".25">Replay 1</text>
<g transform="translate(464 834.6)"><path d="M0 12 l.9 -3.6 L8.2 1.1 l2.7 2.7 L3.6 11.1Z M8.9 .4 l.5 -.5 a1 1 0 0 1 1.4 0 l1.3 1.3 a1 1 0 0 1 0 1.4 l-.5 .5Z" fill="#3b66d1"/></g>
</g>
<!-- p_set -->
<g id="p_set">
<path d="M1217.0 127 l7.7 3.5 l-7.7 3.5 l-7.7 -3.5Z" fill="#b9b9b9"/><path d="M1211.7 133.2 l5.3 2.4 l5.3 -2.4 l2.4 1.1 l-7.7 3.5 l-7.7 -3.5Z" fill="#b9b9b9"/><path d="M1211.7 136.9 l5.3 2.4 l5.3 -2.4 l2.4 1.1 l-7.7 3.5 l-7.7 -3.5Z" fill="#b9b9b9"/>
<text x="1232" y="137.6" font-size="13.4" fill="#b9b9b9" textLength="67.6" lengthAdjust="spacingAndGlyphs" stroke="#b9b9b9" stroke-width=".3">Production</text>
<rect x="1197" y="159" width="151" height="38" fill="#3a3a3d" rx="9"/>
<path d="M1212.6 173.2 a6 6 0 1 1 -1.6 6.2" fill="none" stroke="#fff" stroke-width="2.3" stroke-linecap="round"/>
<path d="M1209.6 170 v5.6 h5.6Z" fill="#fff" stroke="#fff" stroke-width="1" stroke-linejoin="round"/>
<text x="1232" y="181.8" font-size="13.4" textLength="41" lengthAdjust="spacingAndGlyphs" stroke="#fff" stroke-width=".35">Replay</text>
<rect x="1384" y="119" width="432" height="1.6" fill="#272727"/>
<rect x="1405.4" y="102" width="3.4" height="1" fill="#ccc"/>
<rect x="1431" y="102" width="4" height="1.2" fill="#ccc"/>
<rect x="1493.5" y="102" width="7.6" height="1.4" fill="#ccc"/>
<text x="1384" y="144" font-size="13" font-weight="bold" fill="#4d4d4d" textLength="76" lengthAdjust="spacingAndGlyphs">Step Values</text>
<text x="1384" y="345" font-size="13" font-weight="bold" fill="#4d4d4d" textLength="121.5" lengthAdjust="spacingAndGlyphs">Keyboard Controls</text>
<text x="1384" y="898.2" font-size="13" font-weight="bold" fill="#4d4d4d" textLength="124.8" lengthAdjust="spacingAndGlyphs">Additional Settings</text>
<text x="1389.4" y="186.9" font-size="13" textLength="38.8" lengthAdjust="spacingAndGlyphs" stroke="#fff" stroke-width=".35">Step 1:</text>
<rect x="1547.3" y="181.20000000000002" width="11.7" height="3" fill="#fff" rx="0.6"/>
<rect x="1571" y="171.20000000000002" width="32" height="23.6" fill="#212936" rx="4"/>
<text x="1587" y="186.70000000000002" font-size="12.4" font-weight="bold" text-anchor="middle">-10</text>
<rect x="1615" y="181.20000000000002" width="11.7" height="3" fill="#fff" rx="0.6"/>
<rect x="1619.35" y="176.85000000000002" width="3" height="11.7" fill="#fff" rx="0.6"/>
<text x="1389.4" y="225.0" font-size="13" textLength="38.8" lengthAdjust="spacingAndGlyphs" stroke="#fff" stroke-width=".35">Step 2:</text>
<rect x="1547.3" y="219.3" width="11.7" height="3" fill="#fff" rx="0.6"/>
<rect x="1571" y="209.3" width="32" height="23.6" fill="#212936" rx="4"/>
<text x="1587" y="224.8" font-size="12.4" font-weight="bold" text-anchor="middle">-5</text>
<rect x="1615" y="219.3" width="11.7" height="3" fill="#fff" rx="0.6"/>
<rect x="1619.35" y="214.95000000000002" width="3" height="11.7" fill="#fff" rx="0.6"/>
<text x="1389.4" y="263.1" font-size="13" textLength="38.8" lengthAdjust="spacingAndGlyphs" stroke="#fff" stroke-width=".35">Step 3:</text>
<rect x="1547.3" y="257.4" width="11.7" height="3" fill="#fff" rx="0.6"/>
<rect x="1571" y="247.4" width="32" height="23.6" fill="#212936" rx="4"/>
<text x="1587" y="262.9" font-size="12.4" font-weight="bold" text-anchor="middle">5</text>
<rect x="1615" y="257.4" width="11.7" height="3" fill="#fff" rx="0.6"/>
<rect x="1619.35" y="253.05" width="3" height="11.7" fill="#fff" rx="0.6"/>
<text x="1389.4" y="301.20000000000005" font-size="13" textLength="38.8" lengthAdjust="spacingAndGlyphs" stroke="#fff" stroke-width=".35">Step 4:</text>
<rect x="1547.3" y="295.5" width="11.7" height="3" fill="#fff" rx="0.6"/>
<rect x="1571" y="285.5" width="32" height="23.6" fill="#212936" rx="4"/>
<text x="1587" y="301.0" font-size="12.4" font-weight="bold" text-anchor="middle">10</text>
<rect x="1615" y="295.5" width="11.7" height="3" fill="#fff" rx="0.6"/>
<rect x="1619.35" y="291.15000000000003" width="3" height="11.7" fill="#fff" rx="0.6"/>
<text x="1389.4" y="387.3" font-size="13" textLength="72.3" lengthAdjust="spacingAndGlyphs" stroke="#fff" stroke-width=".35">Replay Mode</text>
<rect x="1535.5" y="365.5" width="257.4" height="35" fill="#212936" rx="3" stroke="#252d3a" stroke-width="1"/>
<text x="1542.8" y="387.2" font-size="12.6" font-weight="bold" fill="#676e79" textLength="77" lengthAdjust="spacingAndGlyphs">Not assigned</text>
<text x="1389.4" y="429.3" font-size="13" textLength="61.4" lengthAdjust="spacingAndGlyphs" stroke="#fff" stroke-width=".35">Play/Pause</text>
<rect x="1535.5" y="407.5" width="257.4" height="35" fill="#212936" rx="3" stroke="#252d3a" stroke-width="1"/>
<text x="1542.8" y="429.2" font-size="12.6" font-weight="bold" fill="#676e79" textLength="77" lengthAdjust="spacingAndGlyphs">Not assigned</text>
<text x="1389.4" y="471.3" font-size="13" textLength="34.4" lengthAdjust="spacingAndGlyphs" stroke="#fff" stroke-width=".35">Step 1</text>
<rect x="1535.5" y="449.5" width="257.4" height="35" fill="#212936" rx="3" stroke="#252d3a" stroke-width="1"/>
<text x="1542.8" y="471.2" font-size="12.6" font-weight="bold" fill="#676e79" textLength="77" lengthAdjust="spacingAndGlyphs">Not assigned</text>
<text x="1389.4" y="513.3" font-size="13" textLength="35.2" lengthAdjust="spacingAndGlyphs" stroke="#fff" stroke-width=".35">Step 2</text>
<rect x="1535.5" y="491.5" width="257.4" height="35" fill="#212936" rx="3" stroke="#252d3a" stroke-width="1"/>
<text x="1542.8" y="513.2" font-size="12.6" font-weight="bold" fill="#676e79" textLength="77" lengthAdjust="spacingAndGlyphs">Not assigned</text>
<text x="1389.4" y="555.3000000000001" font-size="13" textLength="35.2" lengthAdjust="spacingAndGlyphs" stroke="#fff" stroke-width=".35">Step 3</text>
<rect x="1535.5" y="533.5" width="257.4" height="35" fill="#212936" rx="3" stroke="#252d3a" stroke-width="1"/>
<text x="1542.8" y="555.2" font-size="12.6" font-weight="bold" fill="#676e79" textLength="77" lengthAdjust="spacingAndGlyphs">Not assigned</text>
<text x="1389.4" y="597.3000000000001" font-size="13" textLength="35.6" lengthAdjust="spacingAndGlyphs" stroke="#fff" stroke-width=".35">Step 4</text>
<rect x="1535.5" y="575.5" width="257.4" height="35" fill="#212936" rx="3" stroke="#252d3a" stroke-width="1"/>
<text x="1542.8" y="597.2" font-size="12.6" font-weight="bold" fill="#676e79" textLength="77" lengthAdjust="spacingAndGlyphs">Not assigned</text>
<text x="1389.4" y="639.3000000000001" font-size="13" textLength="40.8" lengthAdjust="spacingAndGlyphs" stroke="#fff" stroke-width=".35">Angle 1</text>
<rect x="1535.5" y="617.5" width="257.4" height="35" fill="#212936" rx="3" stroke="#252d3a" stroke-width="1"/>
<text x="1542.8" y="639.2" font-size="12.6" font-weight="bold" fill="#676e79" textLength="77" lengthAdjust="spacingAndGlyphs">Not assigned</text>
<text x="1389.4" y="681.3000000000001" font-size="13" textLength="41.6" lengthAdjust="spacingAndGlyphs" stroke="#fff" stroke-width=".35">Angle 2</text>
<rect x="1535.5" y="659.5" width="257.4" height="35" fill="#212936" rx="3" stroke="#252d3a" stroke-width="1"/>
<text x="1542.8" y="681.2" font-size="12.6" font-weight="bold" fill="#676e79" textLength="77" lengthAdjust="spacingAndGlyphs">Not assigned</text>
<text x="1389.4" y="723.3000000000001" font-size="13" textLength="41.6" lengthAdjust="spacingAndGlyphs" stroke="#fff" stroke-width=".35">Angle 3</text>
<rect x="1535.5" y="701.5" width="257.4" height="35" fill="#212936" rx="3" stroke="#252d3a" stroke-width="1"/>
<text x="1542.8" y="723.2" font-size="12.6" font-weight="bold" fill="#676e79" textLength="77" lengthAdjust="spacingAndGlyphs">Not assigned</text>
<text x="1389.4" y="765.3000000000001" font-size="13" textLength="42" lengthAdjust="spacingAndGlyphs" stroke="#fff" stroke-width=".35">Angle 4</text>
<rect x="1535.5" y="743.5" width="257.4" height="35" fill="#212936" rx="3" stroke="#252d3a" stroke-width="1"/>
<text x="1542.8" y="765.2" font-size="12.6" font-weight="bold" fill="#676e79" textLength="77" lengthAdjust="spacingAndGlyphs">Not assigned</text>
<text x="1389.4" y="807.3000000000001" font-size="13" textLength="57.6" lengthAdjust="spacingAndGlyphs" stroke="#fff" stroke-width=".35">Jump to in</text>
<rect x="1535.5" y="785.5" width="257.4" height="35" fill="#212936" rx="3" stroke="#252d3a" stroke-width="1"/>
<text x="1542.8" y="807.2" font-size="12.6" font-weight="bold" fill="#676e79" textLength="77" lengthAdjust="spacingAndGlyphs">Not assigned</text>
<text x="1389.4" y="849.3000000000001" font-size="13" textLength="66.5" lengthAdjust="spacingAndGlyphs" stroke="#fff" stroke-width=".35">Jump to out</text>
<rect x="1535.5" y="827.5" width="257.4" height="35" fill="#212936" rx="3" stroke="#252d3a" stroke-width="1"/>
<text x="1542.8" y="849.2" font-size="12.6" font-weight="bold" fill="#676e79" textLength="77" lengthAdjust="spacingAndGlyphs">Not assigned</text>
<rect x="1389.8" y="920.6" width="23" height="14.2" fill="#4a9dff" rx="7.1"/>
<circle cx="1405.3" cy="927.7" r="4.9" fill="#1b1b1b"/>
<text x="1418.3" y="932.4" font-size="13" textLength="98.4" lengthAdjust="spacingAndGlyphs" stroke="#fff" stroke-width=".35">Takeover preview</text>
<rect x="1375.5" y="878.5" width="163.2" height="71" fill="none" stroke="#ff4500" stroke-width="5" style="filter:drop-shadow(0 2px 3px rgba(0,0,0,.5))"/>
<rect x="1834" y="139" width="9.4" height="822" fill="#2d63a7" rx="4.7"/>
<rect x="1866" y="124.0" width="15.2" height="2" fill="#fff"/>
<rect x="1866" y="127.5" width="15.2" height="2" fill="#fff"/>
<rect x="1866" y="131.0" width="4.4" height="2" fill="#fff"/>
<rect x="1866" y="134.5" width="4.4" height="2" fill="#fff"/>
<rect x="1866" y="138.0" width="4.4" height="2" fill="#fff"/>
<rect x="1871.3" y="131" width="10.7" height="9" fill="#fff"/>
<path d="M1875 133.8 l3.2 1.8 l-3.2 1.8Z" fill="#1b1b1b"/>
</g>
<!-- p_side -->
<g id="p_side">
<rect x="21.3" y="205" width="17.1" height="16.3" fill="#fff" rx="2.2"/>
<rect x="25.4" y="214.2" width="1.9" height="2.6" fill="#1b1b1b"/>
<rect x="28.8" y="211.6" width="1.9" height="5.2" fill="#1b1b1b"/>
<rect x="32.3" y="208.6" width="2.2" height="8.2" fill="#1b1b1b"/>
<path d="M22 281.8 a9.8 9.8 0 1 1 15.4 0Z" fill="none" stroke="#fff" stroke-width="2.4" stroke-linejoin="round"/>
<path d="M27.6 277.4 l7.4 -7.8 l-4 9.6 a2.1 2.1 0 0 1 -3.4 -1.8Z" fill="#fff"/>
<rect x="21.3" y="328.8" width="7.6" height="9.4" fill="#fff"/>
<rect x="30.6" y="328.8" width="7.8" height="5.6" fill="#fff"/>
<rect x="21.3" y="339.8" width="7.6" height="5.6" fill="#fff"/>
<rect x="30.6" y="336" width="7.8" height="9.4" fill="#fff"/>
<rect x="19.2" y="536.8" width="16.4" height="16.4" fill="#3b66d1" rx="2.6"/>
<path d="M35.2 542.6 l4.7 -3.6 v12 l-4.7 -3.6Z" fill="#3b66d1"/>
<path d="M22 549.6 l3.4 -4.4 l2 2.4 l1.6 -1.6 l3.4 3.6Z" fill="#1b1b1b"/>
<path d="M21.1 607.4 a8.6 8.6 0 0 1 17.2 0" fill="none" stroke="#fff" stroke-width="1.5"/>
<path d="M24.4 607.4 a5.3 5.3 0 0 1 10.6 0" fill="none" stroke="#fff" stroke-width="1.5"/>
<circle cx="29.7" cy="606.6" r="1.9" fill="#fff"/>
<path d="M29.7 607 v3.6 l-2.8 4 M29.7 610.6 l2.8 4" fill="none" stroke="#fff" stroke-width="1.7"/>
<circle cx="24.5" cy="664.3" r="3.5" fill="#fff"/>
<circle cx="24.5" cy="673.7" r="3.5" fill="#fff"/>
<path d="M26 665.6 L37.6 675.6 M26 672.4 L37.6 662.2" fill="none" stroke="#fff" stroke-width="2.2"/>
<rect x="20.8" y="722.4" width="17.4" height="11.6" fill="#fff" rx="1.6"/>
<rect x="22.8" y="724.3" width="1.6" height="1.4" fill="#1b1b1b"/>
<rect x="25.7" y="724.3" width="1.6" height="1.4" fill="#1b1b1b"/>
<rect x="28.6" y="724.3" width="1.6" height="1.4" fill="#1b1b1b"/>
<rect x="31.5" y="724.3" width="1.6" height="1.4" fill="#1b1b1b"/>
<rect x="34.4" y="724.3" width="1.6" height="1.4" fill="#1b1b1b"/>
<rect x="22.8" y="726.8" width="1.6" height="1.4" fill="#1b1b1b"/>
<rect x="25.7" y="726.8" width="1.6" height="1.4" fill="#1b1b1b"/>
<rect x="28.6" y="726.8" width="1.6" height="1.4" fill="#1b1b1b"/>
<rect x="31.5" y="726.8" width="1.6" height="1.4" fill="#1b1b1b"/>
<rect x="34.4" y="726.8" width="1.6" height="1.4" fill="#1b1b1b"/>
<rect x="24.6" y="729.8" width="9.8" height="1.5" fill="#1b1b1b"/>
<path d="M26 735.6 h7 l-3.5 3.6Z" fill="#fff"/>
<rect x="20.8" y="784.3" width="17.4" height="16.7" fill="#fff" rx="1.6"/>
<text x="29.5" y="798.2" font-size="13.6" fill="#1b1b1b" text-anchor="middle">A</text>
<circle cx="29.6" cy="850.6" r="3.9" fill="#fff"/>
<circle cx="22.2" cy="852.6" r="2.6" fill="#fff"/>
<path d="M23.6 863 v-2.4 a4.6 4.6 0 0 1 4.6 -4.6 h2.8 a4.6 4.6 0 0 1 3.4 1.6 l-1 5.4Z" fill="#fff"/>
<path d="M18.7 861 v-1.6 a3.2 3.2 0 0 1 3.2 -3.2 h1.6 a3.4 3.4 0 0 1 1.2 .2 a6 6 0 0 0 -2.4 4.6Z" fill="#fff"/>
<circle cx="37.4" cy="858.4" r="5.4" fill="#1b1b1b"/>
<path d="M36.03 855.05 L36.35 853.82 L38.45 853.82 L38.77 855.05 L39.61 855.54 L40.84 855.20 L41.89 857.02 L40.99 857.92 L40.99 858.88 L41.89 859.78 L40.84 861.60 L39.61 861.26 L38.77 861.75 L38.45 862.98 L36.35 862.98 L36.03 861.75 L35.19 861.26 L33.96 861.60 L32.91 859.78 L33.81 858.88 L33.81 857.92 L32.91 857.02 L33.96 855.20 L35.19 855.54Z M35.85 858.40 a1.5510000000000002 1.5510000000000002 0 1 0 3.1020000000000003 0 a1.5510000000000002 1.5510000000000002 0 1 0 -3.1020000000000003 0Z" fill="#fff" fill-rule="evenodd" stroke="#fff" stroke-width="0.47" stroke-linejoin="round"/>
<rect x="23.75" y="909.4" width="1.5" height="15" fill="#fff"/>
<circle cx="24.5" cy="914.2" r="2.2" fill="#fff"/>
<rect x="28.75" y="909.4" width="1.5" height="15" fill="#fff"/>
<circle cx="29.5" cy="919.8" r="2.2" fill="#fff"/>
<rect x="33.65" y="909.4" width="1.5" height="15" fill="#fff"/>
<circle cx="34.4" cy="914.2" r="2.2" fill="#fff"/>
</g>
<!-- p_mark -->
<g id="p_mark">
<defs><clipPath id="cw"><rect x="1800" y="0" width="104" height="52"/></clipPath><clipPath id="cn"><rect x="1800" y="52" width="104" height="60"/></clipPath></defs>
<g clip-path="url(#cw)"><path d="M1835.60 19.59 Q1835.24 38.08 1855.50 62.80 Q1876.73 38.91 1877.10 20.41 A20.75 20.75 0 0 0 1835.60 19.59Z" fill="#000" stroke="#000" stroke-width="10.4" stroke-linejoin="round" transform="translate(0 4.4)"/></g>
<g clip-path="url(#cn)"><path d="M1835.60 19.59 Q1835.24 38.08 1855.50 62.80 Q1876.73 38.91 1877.10 20.41 A20.75 20.75 0 0 0 1835.60 19.59Z" fill="#000" opacity=".45" stroke="#000" stroke-width="4" stroke-linejoin="round" transform="translate(0 3)" style="filter:blur(2.5px)"/></g>
<path d="M1835.60 19.59 Q1835.24 38.08 1855.50 62.80 Q1876.73 38.91 1877.10 20.41 A20.75 20.75 0 0 0 1835.60 19.59Z" fill="#ff4500"/>
<path d="M1858.9 33.9 h-2.1 v-12.6 q-1.7 1.7 -4.6 2.9 v-2 q4 -2 5.4 -4.4 h1.3Z" fill="#fff"/>
<path d="M1155.79 199.00 Q1168.39 198.94 1198.00 178.80 Q1168.21 158.94 1155.61 159.00 A20 20 0 0 0 1155.79 199.00Z" fill="#ff4500" style="filter:drop-shadow(0 2px 3px rgba(0,0,0,.55))"/>
<text x="1160.6" y="187.1" font-size="22" text-anchor="middle">2</text>
<path d="M1329.10 935.10 Q1341.70 935.04 1371.20 914.80 Q1341.50 894.84 1328.90 894.90 A20.1 20.1 0 0 0 1329.10 935.10Z" fill="#ff4500" style="filter:drop-shadow(0 2px 3px rgba(0,0,0,.55))"/>
<text x="1333.5" y="922.9" font-size="22" text-anchor="middle">3</text>
</g>
</svg>
</div>
</body>
</html>
